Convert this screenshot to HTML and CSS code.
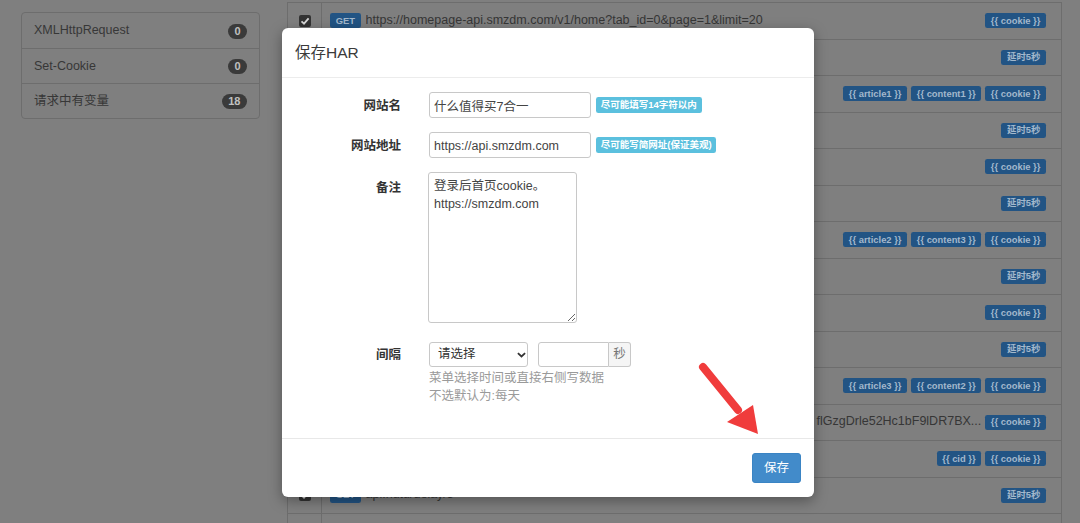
FILE: index.html
```html
<!DOCTYPE html>
<html lang="zh-CN">
<head>
<meta charset="utf-8">
<title>保存HAR</title>
<link rel="stylesheet" href="styles.css">
</head>
<body>
<div class="page">
  <aside class="sidebar">
    <div class="side-item"><span>XMLHttpRequest</span><span class="count">0</span></div>
    <div class="side-item"><span>Set-Cookie</span><span class="count">0</span></div>
    <div class="side-item"><span>请求中有变量</span><span class="count">18</span></div>
  </aside>

  <div class="table">
    <div class="row">
      <div class="check-cell"><span class="cb"><svg viewBox="0 0 12 12" width="12" height="12"><path d="M2.5 6.3 L5 8.6 L9.6 3.4" fill="none" stroke="#d8d8d8" stroke-width="1.8"/></svg></span></div>
      <div class="main-cell"><span class="tag">GET</span><span class="url">https://homepage-api.smzdm.com/v1/home?tab_id=0&amp;page=1&amp;limit=20</span><span class="tags"><span class="tag">{{ cookie }}</span></span></div>
    </div>
    <div class="row">
      <div class="check-cell"><span class="cb"><svg viewBox="0 0 12 12" width="12" height="12"><path d="M2.5 6.3 L5 8.6 L9.6 3.4" fill="none" stroke="#d8d8d8" stroke-width="1.8"/></svg></span></div>
      <div class="main-cell"><span class="tag">GET</span><span class="url">api.nutu/delay/5</span><span class="tags"><span class="tag">延时5秒</span></span></div>
    </div>
    <div class="row">
      <div class="check-cell"><span class="cb"><svg viewBox="0 0 12 12" width="12" height="12"><path d="M2.5 6.3 L5 8.6 L9.6 3.4" fill="none" stroke="#d8d8d8" stroke-width="1.8"/></svg></span></div>
      <div class="main-cell"><span class="tag">POST</span><span class="url">https://user-api.smzdm.com/comments/submit</span><span class="tags"><span class="tag">{{ article1 }}</span><span class="tag">{{ content1 }}</span><span class="tag">{{ cookie }}</span></span></div>
    </div>
    <div class="row">
      <div class="check-cell"><span class="cb"><svg viewBox="0 0 12 12" width="12" height="12"><path d="M2.5 6.3 L5 8.6 L9.6 3.4" fill="none" stroke="#d8d8d8" stroke-width="1.8"/></svg></span></div>
      <div class="main-cell"><span class="tag">GET</span><span class="url">api.nutu/delay/5</span><span class="tags"><span class="tag">延时5秒</span></span></div>
    </div>
    <div class="row">
      <div class="check-cell"><span class="cb"><svg viewBox="0 0 12 12" width="12" height="12"><path d="M2.5 6.3 L5 8.6 L9.6 3.4" fill="none" stroke="#d8d8d8" stroke-width="1.8"/></svg></span></div>
      <div class="main-cell"><span class="tag">GET</span><span class="url">https://user-api.smzdm.com/checkin</span><span class="tags"><span class="tag">{{ cookie }}</span></span></div>
    </div>
    <div class="row">
      <div class="check-cell"><span class="cb"><svg viewBox="0 0 12 12" width="12" height="12"><path d="M2.5 6.3 L5 8.6 L9.6 3.4" fill="none" stroke="#d8d8d8" stroke-width="1.8"/></svg></span></div>
      <div class="main-cell"><span class="tag">GET</span><span class="url">api.nutu/delay/5</span><span class="tags"><span class="tag">延时5秒</span></span></div>
    </div>
    <div class="row">
      <div class="check-cell"><span class="cb"><svg viewBox="0 0 12 12" width="12" height="12"><path d="M2.5 6.3 L5 8.6 L9.6 3.4" fill="none" stroke="#d8d8d8" stroke-width="1.8"/></svg></span></div>
      <div class="main-cell"><span class="tag">POST</span><span class="url">https://user-api.smzdm.com/comments/submit</span><span class="tags"><span class="tag">{{ article2 }}</span><span class="tag">{{ content3 }}</span><span class="tag">{{ cookie }}</span></span></div>
    </div>
    <div class="row">
      <div class="check-cell"><span class="cb"><svg viewBox="0 0 12 12" width="12" height="12"><path d="M2.5 6.3 L5 8.6 L9.6 3.4" fill="none" stroke="#d8d8d8" stroke-width="1.8"/></svg></span></div>
      <div class="main-cell"><span class="tag">GET</span><span class="url">api.nutu/delay/5</span><span class="tags"><span class="tag">延时5秒</span></span></div>
    </div>
    <div class="row">
      <div class="check-cell"><span class="cb"><svg viewBox="0 0 12 12" width="12" height="12"><path d="M2.5 6.3 L5 8.6 L9.6 3.4" fill="none" stroke="#d8d8d8" stroke-width="1.8"/></svg></span></div>
      <div class="main-cell"><span class="tag">GET</span><span class="url">https://user-api.smzdm.com/vip</span><span class="tags"><span class="tag">{{ cookie }}</span></span></div>
    </div>
    <div class="row">
      <div class="check-cell"><span class="cb"><svg viewBox="0 0 12 12" width="12" height="12"><path d="M2.5 6.3 L5 8.6 L9.6 3.4" fill="none" stroke="#d8d8d8" stroke-width="1.8"/></svg></span></div>
      <div class="main-cell"><span class="tag">GET</span><span class="url">api.nutu/delay/5</span><span class="tags"><span class="tag">延时5秒</span></span></div>
    </div>
    <div class="row">
      <div class="check-cell"><span class="cb"><svg viewBox="0 0 12 12" width="12" height="12"><path d="M2.5 6.3 L5 8.6 L9.6 3.4" fill="none" stroke="#d8d8d8" stroke-width="1.8"/></svg></span></div>
      <div class="main-cell"><span class="tag">POST</span><span class="url">https://user-api.smzdm.com/comments/submit</span><span class="tags"><span class="tag">{{ article3 }}</span><span class="tag">{{ content2 }}</span><span class="tag">{{ cookie }}</span></span></div>
    </div>
    <div class="row">
      <div class="check-cell"><span class="cb"><svg viewBox="0 0 12 12" width="12" height="12"><path d="M2.5 6.3 L5 8.6 L9.6 3.4" fill="none" stroke="#d8d8d8" stroke-width="1.8"/></svg></span></div>
      <div class="main-cell"><span class="tag">GET</span><span class="url url-tail"><span>https://zhiyou.smzdm.com/user/info/jsonp_get_current?with_avatar_ornament=1&amp;tk flGzgDrle52Hc1bF9lDR7BX...</span></span><span class="tags"><span class="tag">{{ cookie }}</span></span></div>
    </div>
    <div class="row">
      <div class="check-cell"><span class="cb"><svg viewBox="0 0 12 12" width="12" height="12"><path d="M2.5 6.3 L5 8.6 L9.6 3.4" fill="none" stroke="#d8d8d8" stroke-width="1.8"/></svg></span></div>
      <div class="main-cell"><span class="tag">GET</span><span class="url">https://user-api.smzdm.com/task/list</span><span class="tags"><span class="tag">{{ cid }}</span><span class="tag">{{ cookie }}</span></span></div>
    </div>
    <div class="row">
      <div class="check-cell"><span class="cb"><svg viewBox="0 0 12 12" width="12" height="12"><path d="M2.5 6.3 L5 8.6 L9.6 3.4" fill="none" stroke="#d8d8d8" stroke-width="1.8"/></svg></span></div>
      <div class="main-cell"><span class="tag">GET</span><span class="url">api.nutu/delay/5</span><span class="tags"><span class="tag">延时5秒</span></span></div>
    </div>
    <div class="row">
      <div class="check-cell"></div>
      <div class="main-cell"></div>
    </div>
  </div>
</div>

<div class="modal">
  <div class="modal-header">保存HAR</div>
  <div class="modal-body">
    <div class="form-row">
      <label class="form-label">网站名</label>
      <div class="control">
        <input class="input" type="text" value="什么值得买7合一">
        <span class="hint">尽可能填写14字符以内</span>
      </div>
    </div>
    <div class="form-row">
      <label class="form-label">网站地址</label>
      <div class="control">
        <input class="input" type="text" value="https://api.smzdm.com">
        <span class="hint">尽可能写简网址(保证美观)</span>
      </div>
    </div>
    <div class="form-row row-note">
      <label class="form-label label-note">备注</label>
      <textarea class="textarea">登录后首页cookie。
https://smzdm.com</textarea>
    </div>
    <div class="form-row">
      <label class="form-label label-sm">间隔</label>
      <div class="stack">
        <div class="control">
          <div class="select-wrap">
            <select class="select"><option>请选择</option></select>
            <svg class="chev" viewBox="0 0 10 6" width="9" height="6"><path d="M1 1 L5 4.6 L9 1" fill="none" stroke="#333" stroke-width="2"/></svg>
          </div>
          <div class="group">
            <input class="input input-sec" type="text" value="">
            <span class="addon">秒</span>
          </div>
        </div>
        <div class="help help-first">菜单选择时间或直接右侧写数据</div>
        <div class="help">不选默认为:每天</div>
      </div>
    </div>
  </div>
  <div class="modal-footer">
    <button class="btn" type="button">保存</button>
  </div>
</div>

<svg class="arrow" viewBox="0 0 80 90" width="80" height="90">
  <line x1="13" y1="12" x2="48" y2="55" stroke="#f03c3c" stroke-width="8" stroke-linecap="round"/>
  <polygon points="37,67 63,50 68,79" fill="#f03c3c"/>
</svg>
</body>
</html>
```

FILE: styles.css
```css
* { box-sizing: border-box; }

html, body {
  margin: 0;
  height: 100%;
}

body {
  position: relative;
  overflow: hidden;
  background: #7f7f7f;
  font-family: "Liberation Sans", "Noto Sans CJK SC", sans-serif;
  font-size: 12.5px;
  line-height: 1.42;
  color: #373737;
}

/* ---------- background page ---------- */
.page {
  display: flex;
  align-items: flex-start;
  gap: 27px;
  padding-left: 21px;
}

.sidebar {
  width: 239px;
  margin-top: 12px;
  border: 1px solid #6d6d6d;
  border-radius: 4px;
}

.side-item {
  height: 35px;
  display: flex;
  align-items: center;
  justify-content: space-between;
  padding: 1px 12px 0;
}

.side-item + .side-item { border-top: 1px solid #6d6d6d; }

.count {
  background: #3a3a3a;
  color: #c0c0c0;
  font-weight: bold;
  font-size: 11px;
  line-height: 11px;
  padding: 2px 6.5px;
  border-radius: 10px;
}

.table {
  width: 775px;
  margin-top: 2px;
  border: 1px solid #6d6d6d;
  border-bottom: 0;
}

.row {
  display: flex;
  height: 36.5px;
  border-bottom: 1px solid #6d6d6d;
}

.check-cell {
  width: 34px;
  flex-shrink: 0;
  border-right: 1px solid #6d6d6d;
  display: flex;
  align-items: center;
  justify-content: center;
}

.cb {
  width: 12px;
  height: 12px;
  border-radius: 2px;
  background: #333;
  display: flex;
}

.main-cell {
  flex: 1;
  min-width: 0;
  display: flex;
  align-items: center;
  padding: 0 15px 0 8px;
}

.url {
  flex: 1;
  min-width: 0;
  margin: 0 4px 0 5px;
  white-space: nowrap;
  overflow: hidden;
  text-overflow: ellipsis;
  color: #363636;
}

.url-tail {
  display: flex;
  justify-content: flex-end;
}

.url-tail span { flex-shrink: 0; }

.tags {
  display: flex;
  gap: 4px;
  margin-left: auto;
}

.tag {
  display: inline-block;
  font-size: 9.4px;
  font-weight: bold;
  line-height: 1;
  padding: .25em .6em .3em;
  border-radius: .25em;
  background: #225484;
  color: #a3b8cc;
  white-space: nowrap;
}

/* ---------- modal ---------- */
.modal {
  position: absolute;
  left: 282px;
  top: 28px;
  width: 532px;
  height: 469px;
  display: flex;
  flex-direction: column;
  background: #fff;
  border-radius: 6px;
  box-shadow: 0 4px 14px rgba(0, 0, 0, .35);
  color: #333;
}

.modal-header {
  height: 50px;
  display: flex;
  align-items: center;
  padding: 0 13px;
  border-bottom: 1px solid #ececec;
  font-size: 15.5px;
  color: #3a3a3a;
}

.modal-body {
  flex: 1;
  padding-top: 14px;
}

.modal-footer {
  display: flex;
  justify-content: flex-end;
  padding: 14px 13px;
  border-top: 1px solid #e8e8e8;
}

.form-row {
  display: flex;
  align-items: flex-start;
  margin-bottom: 14px;
}

.row-note { margin-bottom: 19px; }

.form-label {
  width: 119px;
  flex-shrink: 0;
  margin-right: 28px;
  text-align: right;
  font-weight: bold;
  padding-top: 2px;
  line-height: 24px;
  color: #333;
}

.label-note { padding-top: 4px; }

.label-sm { line-height: 23px; }

.control {
  display: flex;
  align-items: center;
}

.input {
  width: 162px;
  height: 26px;
  padding: 1px 4px 0;
  border: 1px solid #c8c8c8;
  border-radius: 3px;
  font: inherit;
  color: #444;
  outline: none;
}

.hint {
  margin-left: 5px;
  padding: .3em .5em .3em;
  border-radius: .25em;
  background: #5bc0de;
  color: #fff;
  font-size: 9.5px;
  font-weight: bold;
  line-height: 1;
  white-space: nowrap;
}

.textarea {
  display: block;
  width: 149px;
  height: 151px;
  margin: 0 0 0 -1px;
  padding: 4px 5px 3px;
  border: 1px solid #c8c8c8;
  border-radius: 3px;
  font: inherit;
  line-height: 18px;
  color: #444;
  outline: none;
}

.stack {
  display: flex;
  flex-direction: column;
}

.select-wrap {
  position: relative;
  width: 99px;
  height: 25px;
}

.select {
  appearance: none;
  -webkit-appearance: none;
  width: 100%;
  height: 100%;
  padding: 1px 0 0 8px;
  border: 1px solid #c8c8c8;
  border-radius: 3px;
  background: #fff;
  font: inherit;
  color: #333;
  outline: none;
}

.chev {
  position: absolute;
  right: 2px;
  top: 10px;
  pointer-events: none;
}

.group {
  display: flex;
  margin-left: 10px;
}

.input-sec {
  width: 71px;
  height: 25px;
  border-radius: 3px 0 0 3px;
}

.addon {
  width: 22px;
  height: 25px;
  display: flex;
  align-items: center;
  justify-content: center;
  border: 1px solid #c8c8c8;
  border-left: 0;
  border-radius: 0 3px 3px 0;
  background: #f5f5f5;
  color: #777;
}

.help {
  color: #9a9a9a;
  line-height: 18px;
}

.help-first { margin-top: 2px; }

.btn {
  height: 30px;
  padding: 0 11px;
  border: 1px solid #3a84c4;
  border-radius: 3px;
  background: #428bca;
  color: #fff;
  font: inherit;
  line-height: 28px;
  cursor: pointer;
}

/* ---------- annotation arrow ---------- */
.arrow {
  position: absolute;
  left: 690px;
  top: 355px;
}
```
